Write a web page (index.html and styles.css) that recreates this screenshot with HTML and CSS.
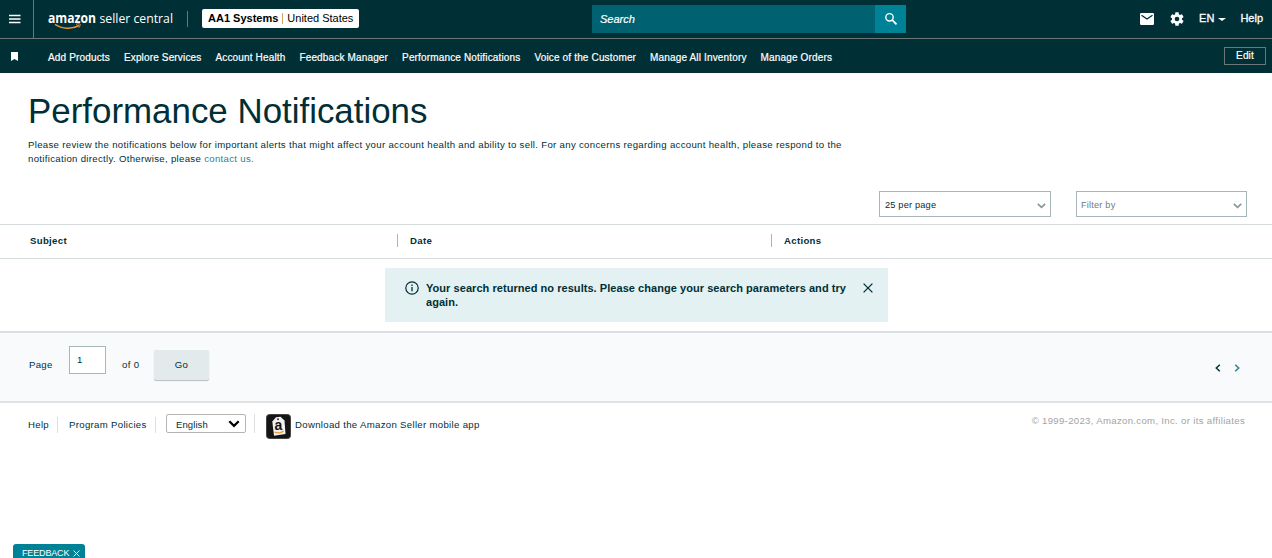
FILE: index.html
```html
<!DOCTYPE html>
<html lang="en">
<head>
  <meta charset="UTF-8">
  <title>Performance Notifications</title>
  <link rel="stylesheet" href="styles.css">
</head>
<body>
  <header>
    <div class="top-bar">
      <div class="menu-btn">
        <svg width="12" height="10" viewBox="0 0 12 10"><path d="M0 1.500h11.500M0 5h11.500M0 8.500h11.500" stroke="#fff" stroke-width="1.300"/></svg>
      </div>
      <svg class="logo" width="130" height="28" viewBox="0 0 130 28">
        <text class="logo-bold" x="0" y="18" textLength="48" lengthAdjust="spacingAndGlyphs">amazon</text>
        <text class="logo-thin" x="51.500" y="18" textLength="73.500" lengthAdjust="spacingAndGlyphs">seller central</text>
        <path d="M7 19.300C14 24 24 24.500 31 20.500" fill="none" stroke="#e8962e" stroke-width="1.500"/>
        <path d="M28 19.300c2-.8 4-.6 4.200 0 .2.700-.5 2.500-1.300 3.300" fill="none" stroke="#e8962e"/>
      </svg>
      <div class="account"><b>AA1 Systems</b><i></i>United States</div>
      <div class="search">
        <span>Search</span>
        <div class="search-btn">
          <svg width="14" height="14" viewBox="0 0 14 14" fill="none" stroke="#fff"><circle cx="5.500" cy="5.300" r="3.700" stroke-width="1.400"/><path d="M8.300 8.100l4.200 4.300" stroke-width="1.700"/></svg>
        </div>
      </div>
      <div class="top-links">
        <svg class="mail" width="14" height="12" viewBox="0 0 14 12"><rect width="14" height="12" rx="1.200" fill="#fff"/><path d="M1.500 2.300L7 6l5.500-3.700" fill="none" stroke="#002f36" stroke-width="1.300"/></svg>
        <svg class="gear" width="16" height="16" viewBox="0 0 24 24" fill="#fff"><path d="M19.430 12.980c.04-.32.070-.64.070-.98s-.03-.66-.07-.98l2.110-1.650c.19-.15.240-.42.120-.64l-2-3.460c-.12-.22-.39-.3-.61-.22l-2.490 1c-.52-.4-1.080-.73-1.690-.98l-.38-2.650A.488.488 0 0 0 14 2h-4c-.25 0-.46.180-.49.420l-.38 2.650c-.61.250-1.170.590-1.690.980l-2.490-1c-.23-.09-.49 0-.61.220l-2 3.460c-.13.220-.07.490.120.640l2.110 1.650c-.04.320-.07.650-.07.980s.03.660.070.980l-2.110 1.650c-.19.150-.24.420-.12.640l2 3.460c.12.220.39.300.61.220l2.490-1c.52.400 1.080.730 1.690.980l.38 2.650c.03.240.240.420.490.420h4c.25 0 .46-.18.490-.42l.38-2.650c.61-.25 1.170-.59 1.690-.98l2.490 1c.23.090.490 0 .61-.22l2-3.460c.12-.22.070-.49-.12-.64l-2.110-1.650zM12 15.500a3.500 3.500 0 1 1 0-7 3.500 3.500 0 0 1 0 7z"/></svg>
        <span class="lang">EN</span>
        <span class="caret"></span>
        <span>Help</span>
      </div>
    </div>
    <nav>
      <svg class="bookmark" width="7" height="9" viewBox="0 0 7 9"><path d="M0 0h7v9L3.500 7 0 9z" fill="#fff"/></svg>
      <a>Add Products</a>
      <a>Explore Services</a>
      <a>Account Health</a>
      <a>Feedback Manager</a>
      <a>Performance Notifications</a>
      <a>Voice of the Customer</a>
      <a>Manage All Inventory</a>
      <a>Manage Orders</a>
      <div class="edit-btn">Edit</div>
    </nav>
  </header>

  <main>
    <h1>Performance Notifications</h1>
    <p class="intro">Please review the notifications below for important alerts that might affect your account health and ability to sell. For any concerns regarding account health, please respond to the<br>notification directly. Otherwise, please <a>contact us.</a></p>
    <div class="filters">
      <div class="select"><span>25 per page</span>
        <svg width="9" height="6" viewBox="0 0 9 6"><path d="M.8.900l3.700 3.500L8.200.900" fill="none" stroke="#879596" stroke-width="1.600"/></svg>
      </div>
      <div class="select filter-by"><span>Filter by</span>
        <svg width="9" height="6" viewBox="0 0 9 6"><path d="M.8.900l3.700 3.500L8.200.900" fill="none" stroke="#879596" stroke-width="1.600"/></svg>
      </div>
    </div>
    <div class="table-head">
      <div>Subject</div>
      <div>Date</div>
      <div>Actions</div>
    </div>
    <div class="results">
      <div class="alert">
        <svg width="14" height="14" viewBox="0 0 14 14"><circle cx="7" cy="7" r="6.200" fill="none" stroke="#002f36" stroke-width="1.200"/><path d="M7 6v4.300M7 3.500v1.400" stroke="#002f36" stroke-width="1.300"/></svg>
        <p>Your search returned no results. Please change your search parameters and try<br>again.</p>
        <svg width="10" height="10" viewBox="0 0 10 10"><path d="M.6.600l8.800 8.800M9.400.600L.6 9.400" stroke="#002f36" stroke-width="1.300"/></svg>
      </div>
    </div>
    <div class="pager">
      <span>Page</span>
      <div class="page-input">1</div>
      <span class="total">of 0</span>
      <div class="go-btn">Go</div>
      <div class="arrows">
        <svg width="6" height="8" viewBox="0 0 6 8"><path d="M4.800.700L1.300 4l3.500 3.300" fill="none" stroke="#002f36" stroke-width="1.500"/></svg>
        <svg width="6" height="8" viewBox="0 0 6 8"><path d="M1.200.700L4.700 4 1.200 7.300" fill="none" stroke="#2c7f91" stroke-width="1.500"/></svg>
      </div>
    </div>
  </main>

  <footer>
    <a class="help">Help</a>
    <a class="policies">Program Policies</a>
    <div class="language">English
      <svg width="12" height="8" viewBox="0 0 12 8"><path d="M1.300 1.300L6 5.900l4.700-4.600" fill="none" stroke="#000" stroke-width="2.200"/></svg>
    </div>
    <div class="app">
      <svg width="25" height="25" viewBox="0 0 25 25">
        <rect x=".5" y=".5" width="24" height="24" rx="3" fill="#151515" stroke="#444"/>
        <path d="M6.300 7.500L10 3.300l4.500-.5 4 3.700 1 13.500-11.500 1.800z" fill="#f2f2f2"/>
        <circle cx="12" cy="5.300" r="1" fill="#333"/>
        <text class="tag-letter" x="8.600" y="16.300">a</text>
        <path d="M8.500 18c2.700 1.500 7 1 9-1" fill="none" stroke="#eb9a35" stroke-width="1.200"/>
      </svg>
      <a>Download the Amazon Seller mobile app</a>
    </div>
    <div class="copyright">© 1999-2023, Amazon.com, Inc. or its affiliates</div>
  </footer>

  <div class="feedback">FEEDBACK
    <svg width="7" height="7" viewBox="0 0 7 7"><path d="M.6.600l5.800 5.800M6.400.600L.6 6.400" stroke="#fff"/></svg>
  </div>
</body>
</html>
```

FILE: styles.css
```css
* {
  box-sizing: border-box;
}
body {
  margin: 0;
  height: 558px;
  overflow: hidden;
  background: #fff;
  color: #002f36;
  font-family: "Liberation Sans", Arial, sans-serif;
  font-size: 9.6px;
  letter-spacing: 0.32px;
}
svg {
  display: block;
  flex: none;
}
header {
  background: #002f36;
  color: #fff;
  letter-spacing: 0;
}
.top-bar {
  display: flex;
  height: 39px;
  border-bottom: 1px solid #6b7778;
}
.menu-btn {
  width: 34px;
  padding: 14px 0 0 9px;
  border-right: 1px solid #6b7778;
}
.logo {
  margin: 5px 0 0 14px;
  overflow: visible;
  fill: #fff;
  font-family: "Open Sans", sans-serif;
  font-size: 13.5px;
}
.logo-bold {
  font-weight: 700;
}
.logo-thin {
  font-weight: 400;
}
.account {
  position: relative;
  width: 157px;
  height: 19px;
  margin: 9px 0 0 24px;
  padding-left: 6px;
  border-radius: 2px;
  background: #fff;
  color: #000;
  font-size: 11px;
  line-height: 19px;
  white-space: nowrap;
}
.account::before {
  content: "";
  position: absolute;
  left: -15px;
  top: 2px;
  height: 16px;
  border-left: 1px solid #6b7778;
}
.account i {
  display: inline-block;
  height: 11px;
  margin: 0 4px;
  border-left: 1px solid #e0a45c;
  vertical-align: -2px;
}
.search {
  display: flex;
  width: 314px;
  height: 28px;
  margin: 5px 0 0 233px;
  background: #006170;
  font-size: 11px;
  font-style: italic;
  line-height: 28px;
  -webkit-text-stroke: 0.2px #fff;
}
.search span {
  flex: 1;
  padding-left: 8px;
}
.search-btn {
  width: 31px;
  padding: 7px 0 0 9px;
  background: #008296;
}
.top-links {
  display: flex;
  margin-left: auto;
  padding-right: 9px;
  font-size: 11px;
  line-height: 37px;
  -webkit-text-stroke: 0.3px #fff;
}
.mail {
  margin-top: 13px;
}
.gear {
  margin: 11px 14px 0 15px;
}
.caret {
  margin: 18px 14px 0 4px;
  height: 0;
  border: 3.5px solid transparent;
  border-width: 3px 4px 0;
  border-top-color: #fff;
}
nav {
  display: flex;
  height: 34px;
  font-size: 10px;
  line-height: 37px;
  letter-spacing: 0.155px;
  -webkit-text-stroke: 0.2px #fff;
}
nav a {
  margin-right: 14px;
  white-space: nowrap;
}
.bookmark {
  margin: 13px 30px 0 11px;
}
.edit-btn {
  width: 42px;
  height: 18px;
  margin: 8px 6px 0 auto;
  border: 1px solid #6b7778;
  line-height: 16px;
  text-align: center;
}
h1 {
  margin: 0;
  padding: 18px 0 0 28px;
  font-size: 34.9px;
  font-weight: 400;
  line-height: 40px;
  letter-spacing: 0;
}
.intro {
  margin: 7px 0 0 28px;
  line-height: 14px;
  white-space: nowrap;
}
.intro a {
  color: #2c7f91;
}
.filters {
  display: flex;
  justify-content: flex-end;
  gap: 25px;
  padding: 25px 25px 7px 0;
}
.select {
  display: flex;
  justify-content: space-between;
  width: 172px;
  height: 26px;
  padding: 0 4px 0 5px;
  border: 1px solid #a7b6b8;
  line-height: 26px;
  font-size: 9.2px;
  letter-spacing: 0.2px;
}
.select svg {
  margin-top: 11px;
}
.filter-by {
  width: 171px;
  padding-left: 4px;
  color: #6f7b7c;
}
.table-head {
  display: grid;
  grid-template-columns: 397px 374px 1fr;
  height: 35px;
  padding-top: 9px;
  border-top: 1px solid #d5dbdb;
  border-bottom: 1px solid #d5dbdb;
  font-weight: 700;
  line-height: 13px;
}
.table-head div {
  height: 13px;
  padding-left: 12px;
  border-left: 1px solid #a7b6b8;
}
.table-head div:first-child {
  padding-left: 30px;
  border: 0;
}
.results {
  height: 72px;
  padding-top: 9px;
}
.alert {
  display: flex;
  width: 503px;
  height: 54px;
  margin-left: 385px;
  padding: 13px 15px 0 20px;
  background: #e3f1f2;
  font-size: 11px;
  font-weight: 700;
  line-height: 14px;
  letter-spacing: 0.05px;
}
.alert p {
  width: 437px;
  margin: 0 0 0 7px;
  white-space: nowrap;
}
.alert svg:last-child {
  margin-top: 2px;
}
.pager {
  display: flex;
  height: 72px;
  padding-left: 29px;
  border-top: 2px solid #dcdfe1;
  border-bottom: 2px solid #dfe2e5;
  background: #f9fafc;
  line-height: 64px;
}
.pager > span {
  width: 24px;
}
.page-input {
  width: 37px;
  height: 28px;
  margin: 13px 16px 0 16px;
  padding-left: 7px;
  border: 1px solid #a7b6b8;
  background: #fff;
  line-height: 25px;
}
.pager .total {
  width: 17px;
  white-space: nowrap;
}
.go-btn {
  width: 55px;
  height: 30px;
  margin: 17px 0 0 15px;
  border-radius: 2px;
  background: #e2eaec;
  box-shadow: 0 1px 1px #b4bcbd;
  line-height: 30px;
  text-align: center;
}
.arrows {
  display: flex;
  gap: 13px;
  margin-left: auto;
  padding: 31px 32px 0 0;
}
footer {
  display: flex;
  padding: 11px 27px 0 28px;
  line-height: 22px;
}
.help, .policies {
  height: 16px;
  margin-top: 3px;
  border-right: 1px solid #dcdfe1;
  line-height: 16px;
  white-space: nowrap;
}
.help {
  width: 30px;
}
.policies {
  width: 87px;
  margin-left: 11px;
}
.language {
  display: flex;
  justify-content: space-between;
  width: 80px;
  height: 19px;
  margin: 0 8px 0 10px;
  padding: 0 5px 0 9px;
  border: 1px solid #b5b5b5;
  border-radius: 2px;
  font-size: 9.5px;
  line-height: 20px;
  letter-spacing: 0.1px;
}
.language svg {
  margin-top: 5px;
}
.app {
  display: flex;
  gap: 4px;
  height: 19px;
  padding-left: 11px;
  border-left: 1px solid #dcdfe1;
}
.tag-letter {
  font-size: 14px;
  font-weight: 700;
  fill: #111;
}
.copyright {
  margin-left: auto;
  color: #a3a3a3;
  line-height: 13px;
}
.feedback {
  position: fixed;
  left: 13px;
  top: 544px;
  display: flex;
  gap: 4px;
  width: 72px;
  height: 18px;
  padding-left: 9px;
  border-radius: 3px 3px 0 0;
  background: #008296;
  color: #fff;
  font-size: 9px;
  line-height: 18px;
  letter-spacing: -0.15px;
}
.feedback svg {
  margin-top: 6px;
}
```
